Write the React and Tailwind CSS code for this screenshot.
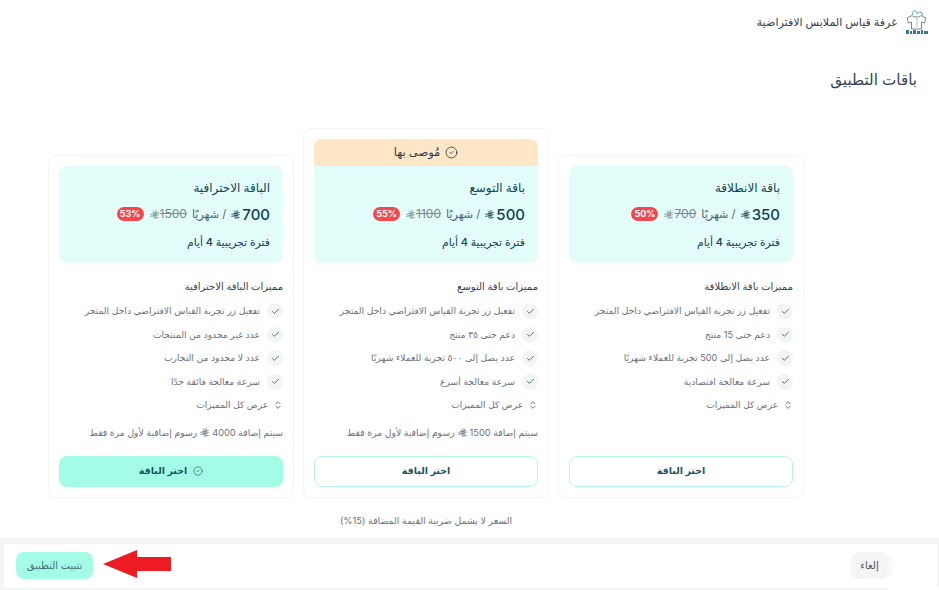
import React from 'react'
import { Check, ChevronsUpDown, CircleCheck } from 'lucide-react'

const FONT = { fontFamily: '"Inter", "DejaVu Sans", sans-serif' }

const plans = [
  {
    name: 'الباقة الاحترافية',
    price: '700',
    old: '1500',
    off: '53%',
    heading: 'مميزات الباقة الاحترافية',
    features: [
      'تفعيل زر تجربة القياس الافتراضي داخل المتجر',
      'عدد غير محدود من المنتجات',
      'عدد لا محدود من التجارب',
      'سرعة معالجة فائقة جدًا',
    ],
    fee: '4000',
    active: true,
  },
  {
    name: 'باقة التوسع',
    price: '500',
    old: '1100',
    off: '55%',
    heading: 'مميزات باقة التوسع',
    features: [
      'تفعيل زر تجربة القياس الافتراضي داخل المتجر',
      'دعم حتى ٣٥ منتج',
      'عدد يصل إلى ٥٠٠ تجربة للعملاء شهريًا',
      'سرعة معالجة أسرع',
    ],
    fee: '1500',
    recommended: true,
  },
  {
    name: 'باقة الانطلاقة',
    price: '350',
    old: '700',
    off: '50%',
    heading: 'مميزات باقة الانطلاقة',
    features: [
      'تفعيل زر تجربة القياس الافتراضي داخل المتجر',
      'دعم حتى 15 منتج',
      'عدد يصل إلى 500 تجربة للعملاء شهريًا',
      'سرعة معالجة اقتصادية',
    ],
  },
]

// saudi riyal sign
const Riyal = ({ className }) => (
  <svg viewBox="0 0 24 24" fill="none" stroke="currentColor" strokeWidth="2.4" strokeLinecap="round" className={className}>
    <path d="M9 2.500c1.500 1.500 2 3 2 5v13M16 1v17" />
    <path d="M2 11.500l20-4.500M2 17l20-4.500M13 22l9-2" />
  </svg>
)

const Logo = () => (
  <svg viewBox="0 0 24 26" className="w-[24px] h-[26px]" fill="none">
    <path d="M7 6.500l-5 2.500 1.500 5 3-1v7h10v-7l3 1 1.500-5-5-2.500c-1 2-8 2-9 0z" stroke="#7b8794" strokeWidth="1" />
    <path d="M8 6c-1.500-2 0-4.500 2.500-4 1.500.3 2 2 1.500 3M12 5c1.500-2 4-2.500 5-1s0 2.500-1 3" stroke="#4f9fa8" strokeWidth="1" />
    <path d="M12 9v9" stroke="#b5bdc6" strokeWidth="1" />
    <path d="M1 21h3v4H1zM5 22h2v3H5zM8 21h3v4H8zM12 22h3v3h-3zM16 21h2v4h-2zM19 22h4v3h-4z" fill="#2f7d8f" />
  </svg>
)

const PlanCard = ({ plan }) => (
  <div className="w-[246px] rounded-lg border border-[#f3f4f6] bg-white p-[10px] flex flex-col">
    {plan.recommended && (
      <div className="h-[27px] rounded-t-lg bg-[#ffe6c7] flex items-center justify-center gap-[5px] text-[11.500px] font-medium text-[#1f3b45]">
        <CircleCheck className="w-[13px] h-[13px]" strokeWidth={1.5} />
        <span>مُوصى بها</span>
      </div>
    )}
    <div className={`h-[97px] bg-[#e3fdfa] px-[13px] pt-[14px] text-[#0f4153] ${plan.recommended ? 'rounded-b-lg' : 'rounded-lg'}`}>
      <div className="text-[12px] leading-[16px] font-medium">{plan.name}</div>
      <div className="mt-[9px] h-[18px] flex items-center gap-[5px]">
        <span className="flex items-center gap-[2px]">
          <span className="text-[15px] font-medium leading-none">{plan.price}</span>
          <Riyal className="w-[9px] h-[9px]" />
        </span>
        <span className="text-[11.200px] text-[#4b6470]">/ شهريًا</span>
        <span className="flex items-center gap-[1px] text-[12px] text-[#7b8a90] line-through">
          {plan.old}
          <Riyal className="w-[9px] h-[9px]" />
        </span>
        <span className="mr-[1px] w-[27px] h-[14px] rounded-full bg-[#f5474f] text-white text-[9px] font-bold flex items-center justify-center">{plan.off}</span>
      </div>
      <div className="mt-[13px] text-[10.800px] leading-[14px] font-medium">فترة تجريبية 4 أيام</div>
    </div>

    <div className="mt-[16px] text-[10px] leading-[14px] font-medium text-[#374151]">{plan.heading}</div>
    <ul className="mt-[10px] flex flex-col gap-[7.500px]">
      {plan.features.map((f) => (
        <li key={f} className="h-[16px] flex items-center gap-[7px] text-[9.200px] text-[#6b7280]">
          <span className="w-[16px] h-[16px] rounded-full bg-[#f3f4f6] flex items-center justify-center shrink-0">
            <Check className="w-[9px] h-[9px] text-[#1f4f5f]" strokeWidth={2} />
          </span>
          <span>{f}</span>
        </li>
      ))}
    </ul>
    <div className="mt-[8px] h-[14px] flex items-center gap-[5px] text-[9px] text-[#6b7280]">
      <ChevronsUpDown className="w-[10px] h-[10px] text-[#4b5563]" />
      <span>عرض كل المميزات</span>
    </div>
    <div className="mt-[14px] h-[14px] text-[9.250px] leading-[14px] text-[#6b7280] flex items-center gap-[3px]">
      {plan.fee && (
        <>
          <span>سيتم إضافة {plan.fee}</span>
          <Riyal className="w-[9px] h-[9px]" />
          <span>رسوم إضافية لأول مرة فقط</span>
        </>
      )}
    </div>
    <button
      className={`mt-[16px] h-[31px] rounded-lg flex items-center justify-center gap-[6px] text-[9.500px] font-semibold text-[#1f5564] ${
        plan.active ? 'bg-[#a3fde6]' : 'bg-white border border-[#b5f5e6]'
      }`}
    >
      {plan.active && <CircleCheck className="w-[10px] h-[10px]" strokeWidth={1.5} />}
      <span>اختر الباقة</span>
    </button>
  </div>
)

export default function App() {
  return (
    <div dir="rtl" style={FONT} className="relative w-[939px] h-[590px] overflow-hidden bg-white flex flex-col">
      <header className="h-[44px] pr-[10px] flex items-center gap-[8px]">
        <Logo />
        <span className="text-[11.100px] font-medium text-[#374151]">غرفة قياس الملابس الافتراضية</span>
      </header>

      <h1 className="mt-[23px] pr-[22px] text-[15.200px] leading-[26px] font-medium text-[#374151]">باقات التطبيق</h1>

      <main className="mt-[35px] pr-[135px] flex flex-row-reverse justify-end items-end gap-[9px]">
        {plans.map((p) => (
          <PlanCard key={p.name} plan={p} />
        ))}
      </main>

      <p className="mt-[17px] pr-[87px] text-center text-[9.400px] leading-[12px] text-[#6b7280]">السعر لا يشمل ضريبة القيمة المضافة (15%)</p>

      <footer className="mt-[11px] bg-[#f5f5f5] pt-[6px] pb-[2px] pl-[4px] pr-[2px]">
        <div className="h-[44px] bg-white flex items-center justify-between pr-[45px] pl-[12px]">
          <div className="flex items-center">
            <span className="w-[4px] h-[20px] bg-[#f8f8f8]" />
            <button className="w-[37px] h-[27px] rounded-lg bg-[#f5f5f5] text-[10px] text-[#4b5563]">إلغاء</button>
          </div>
          <button className="w-[77px] h-[27px] rounded-lg bg-[#a3fde6] text-[10px] font-medium text-[#3f6f7c]">تثبيت التطبيق</button>
        </div>
      </footer>

      {/* screenshot crop leaves the bottom right corner white */}
      <div className="absolute right-0 bottom-0 w-[51px] h-[3px] bg-white" />

      {/* red annotation arrow */}
      <svg viewBox="0 0 68 28" className="absolute left-[103px] top-[550px] w-[68px] h-[28px]">
        <path d="M0 14L34 0V7H68V21H34V28Z" fill="#ed1c24" />
      </svg>
    </div>
  )
}
